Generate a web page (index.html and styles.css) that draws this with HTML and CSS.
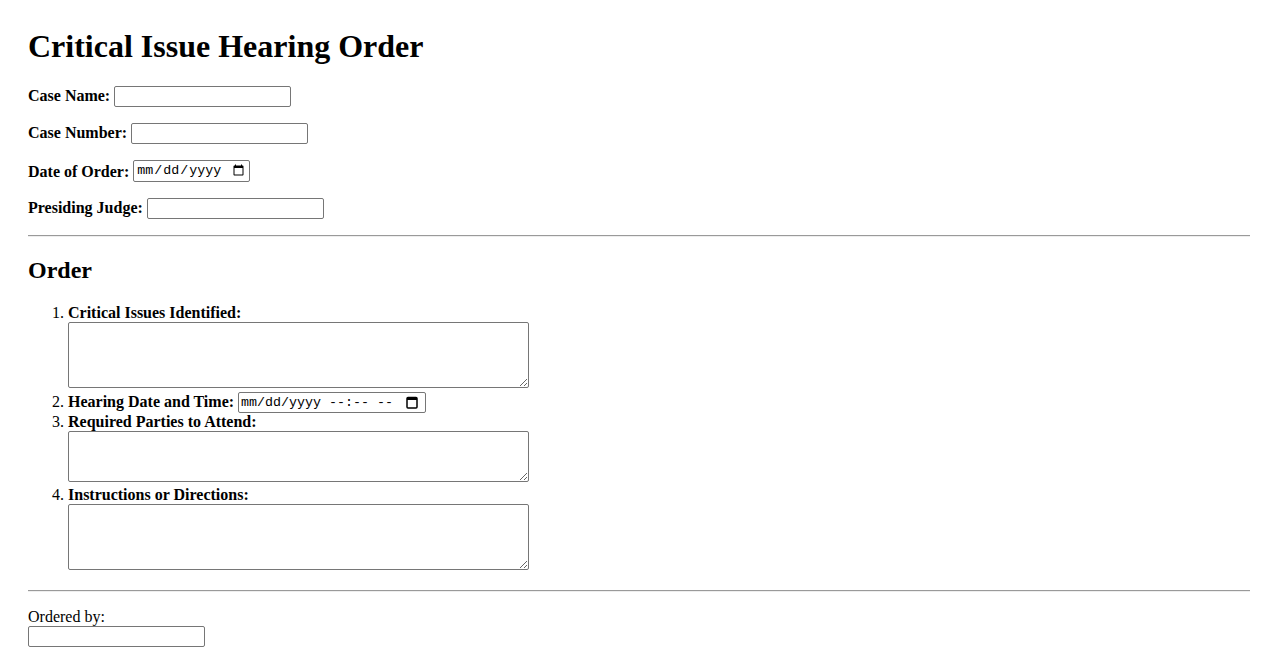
FILE: index.html
```html
<!DOCTYPE html>
<html lang="en">
<head>
<meta charset="utf-8">
<title>Critical Issue Hearing Order</title>
<link rel="stylesheet" href="styles.css">
</head>
<body>
<h1 class="title">Critical Issue Hearing Order</h1>
<form class="order-form">
  <div class="field">
    <label class="field-label" for="case-name">Case Name:</label>
    <input class="text-input" type="text" id="case-name">
  </div>
  <div class="field">
    <label class="field-label" for="case-number">Case Number:</label>
    <input class="text-input" type="text" id="case-number">
  </div>
  <div class="field">
    <label class="field-label" for="order-date">Date of Order:</label>
    <input class="date-input" type="date" id="order-date">
  </div>
  <div class="field">
    <label class="field-label" for="judge">Presiding Judge:</label>
    <input class="text-input" type="text" id="judge">
  </div>
  <hr class="divider">
  <h2 class="section-title">Order</h2>
  <ol class="order-list">
    <li>
      <label class="field-label" for="issues">Critical Issues Identified:</label><br>
      <textarea class="area area-4" id="issues" rows="4"></textarea>
    </li>
    <li>
      <label class="field-label" for="hearing">Hearing Date and Time:</label>
      <span class="dt-box"><input class="dt-text" type="text" id="hearing" placeholder="mm/dd/yyyy --:-- --"><svg class="cal-icon" width="12" height="13" viewBox="0 0 12 13" aria-hidden="true"><rect x="1" y="1.5" width="10" height="10.5" rx="1" fill="none" stroke="#000" stroke-width="1.5"/><rect x="1" y="1.5" width="10" height="2.5" fill="#000"/></svg></span>
    </li>
    <li>
      <label class="field-label" for="parties">Required Parties to Attend:</label><br>
      <textarea class="area area-3" id="parties" rows="3"></textarea>
    </li>
    <li>
      <label class="field-label" for="instructions">Instructions or Directions:</label><br>
      <textarea class="area area-4" id="instructions" rows="4"></textarea>
    </li>
  </ol>
  <hr class="divider">
  <p class="signature">
    <label for="ordered-by">Ordered by:</label><br>
    <input class="text-input" type="text" id="ordered-by">
  </p>
</form>
</body>
</html>
```

FILE: styles.css
```css
html {
  background: #ffffff;
}

body {
  margin: 0;
  padding: 28px;
  font-family: "Liberation Serif", "Times New Roman", serif;
  font-size: 16px;
  color: #000000;
}

.title {
  font-size: 32px;
  font-weight: bold;
  margin: 0 0 21px;
}

.field {
  margin-bottom: 16px;
}

.field-label {
  font-weight: bold;
}

.text-input {
  box-sizing: border-box;
  width: 177px;
  height: 21px;
  padding: 1px 2px;
  border: 1px solid #767676;
  border-radius: 2px;
  font-family: "Liberation Sans", Arial, sans-serif;
  font-size: 13.33px;
  background: #ffffff;
}

.date-input {
  box-sizing: border-box;
  width: 117px;
  height: 22px;
  padding: 1px 2px;
  border: 1px solid #767676;
  border-radius: 2px;
  font-family: "Liberation Mono", "DejaVu Sans Mono", monospace;
  font-size: 13.33px;
  background: #ffffff;
  vertical-align: 3px;
}

.dt-box {
  display: inline-flex;
  align-items: center;
  box-sizing: border-box;
  width: 188px;
  height: 21px;
  border: 1px solid #767676;
  border-radius: 2px;
  background: #ffffff;
  vertical-align: 1px;
}

.dt-text {
  flex: 1;
  min-width: 0;
  border: none;
  outline: none;
  padding: 0 0 0 2px;
  height: 19px;
  background: transparent;
  font-family: "Liberation Mono", "DejaVu Sans Mono", monospace;
  font-size: 13.33px;
  color: #000000;
}

.dt-text::placeholder {
  color: #000000;
  opacity: 1;
}

.cal-icon {
  flex: none;
  margin: 0 7px 0 4px;
}

.divider {
  margin: 8px 0;
  border: none;
  border-top: 1px solid #9a9a9a;
  border-bottom: 1px solid #eeeeee;
  height: 0;
}

.section-title {
  font-size: 24px;
  font-weight: bold;
  margin: 20px 0;
}

.order-list {
  margin: 16px 0;
  padding-left: 40px;
}

.area {
  box-sizing: border-box;
  width: 461px;
  padding: 2px;
  border: 1px solid #767676;
  border-radius: 2px;
  font-family: "Liberation Mono", monospace;
  font-size: 13.33px;
  vertical-align: baseline;
  resize: both;
}

.area-4 {
  height: 66px;
}

.area-3 {
  height: 51px;
}

.signature {
  margin: 16px 0;
}
```
